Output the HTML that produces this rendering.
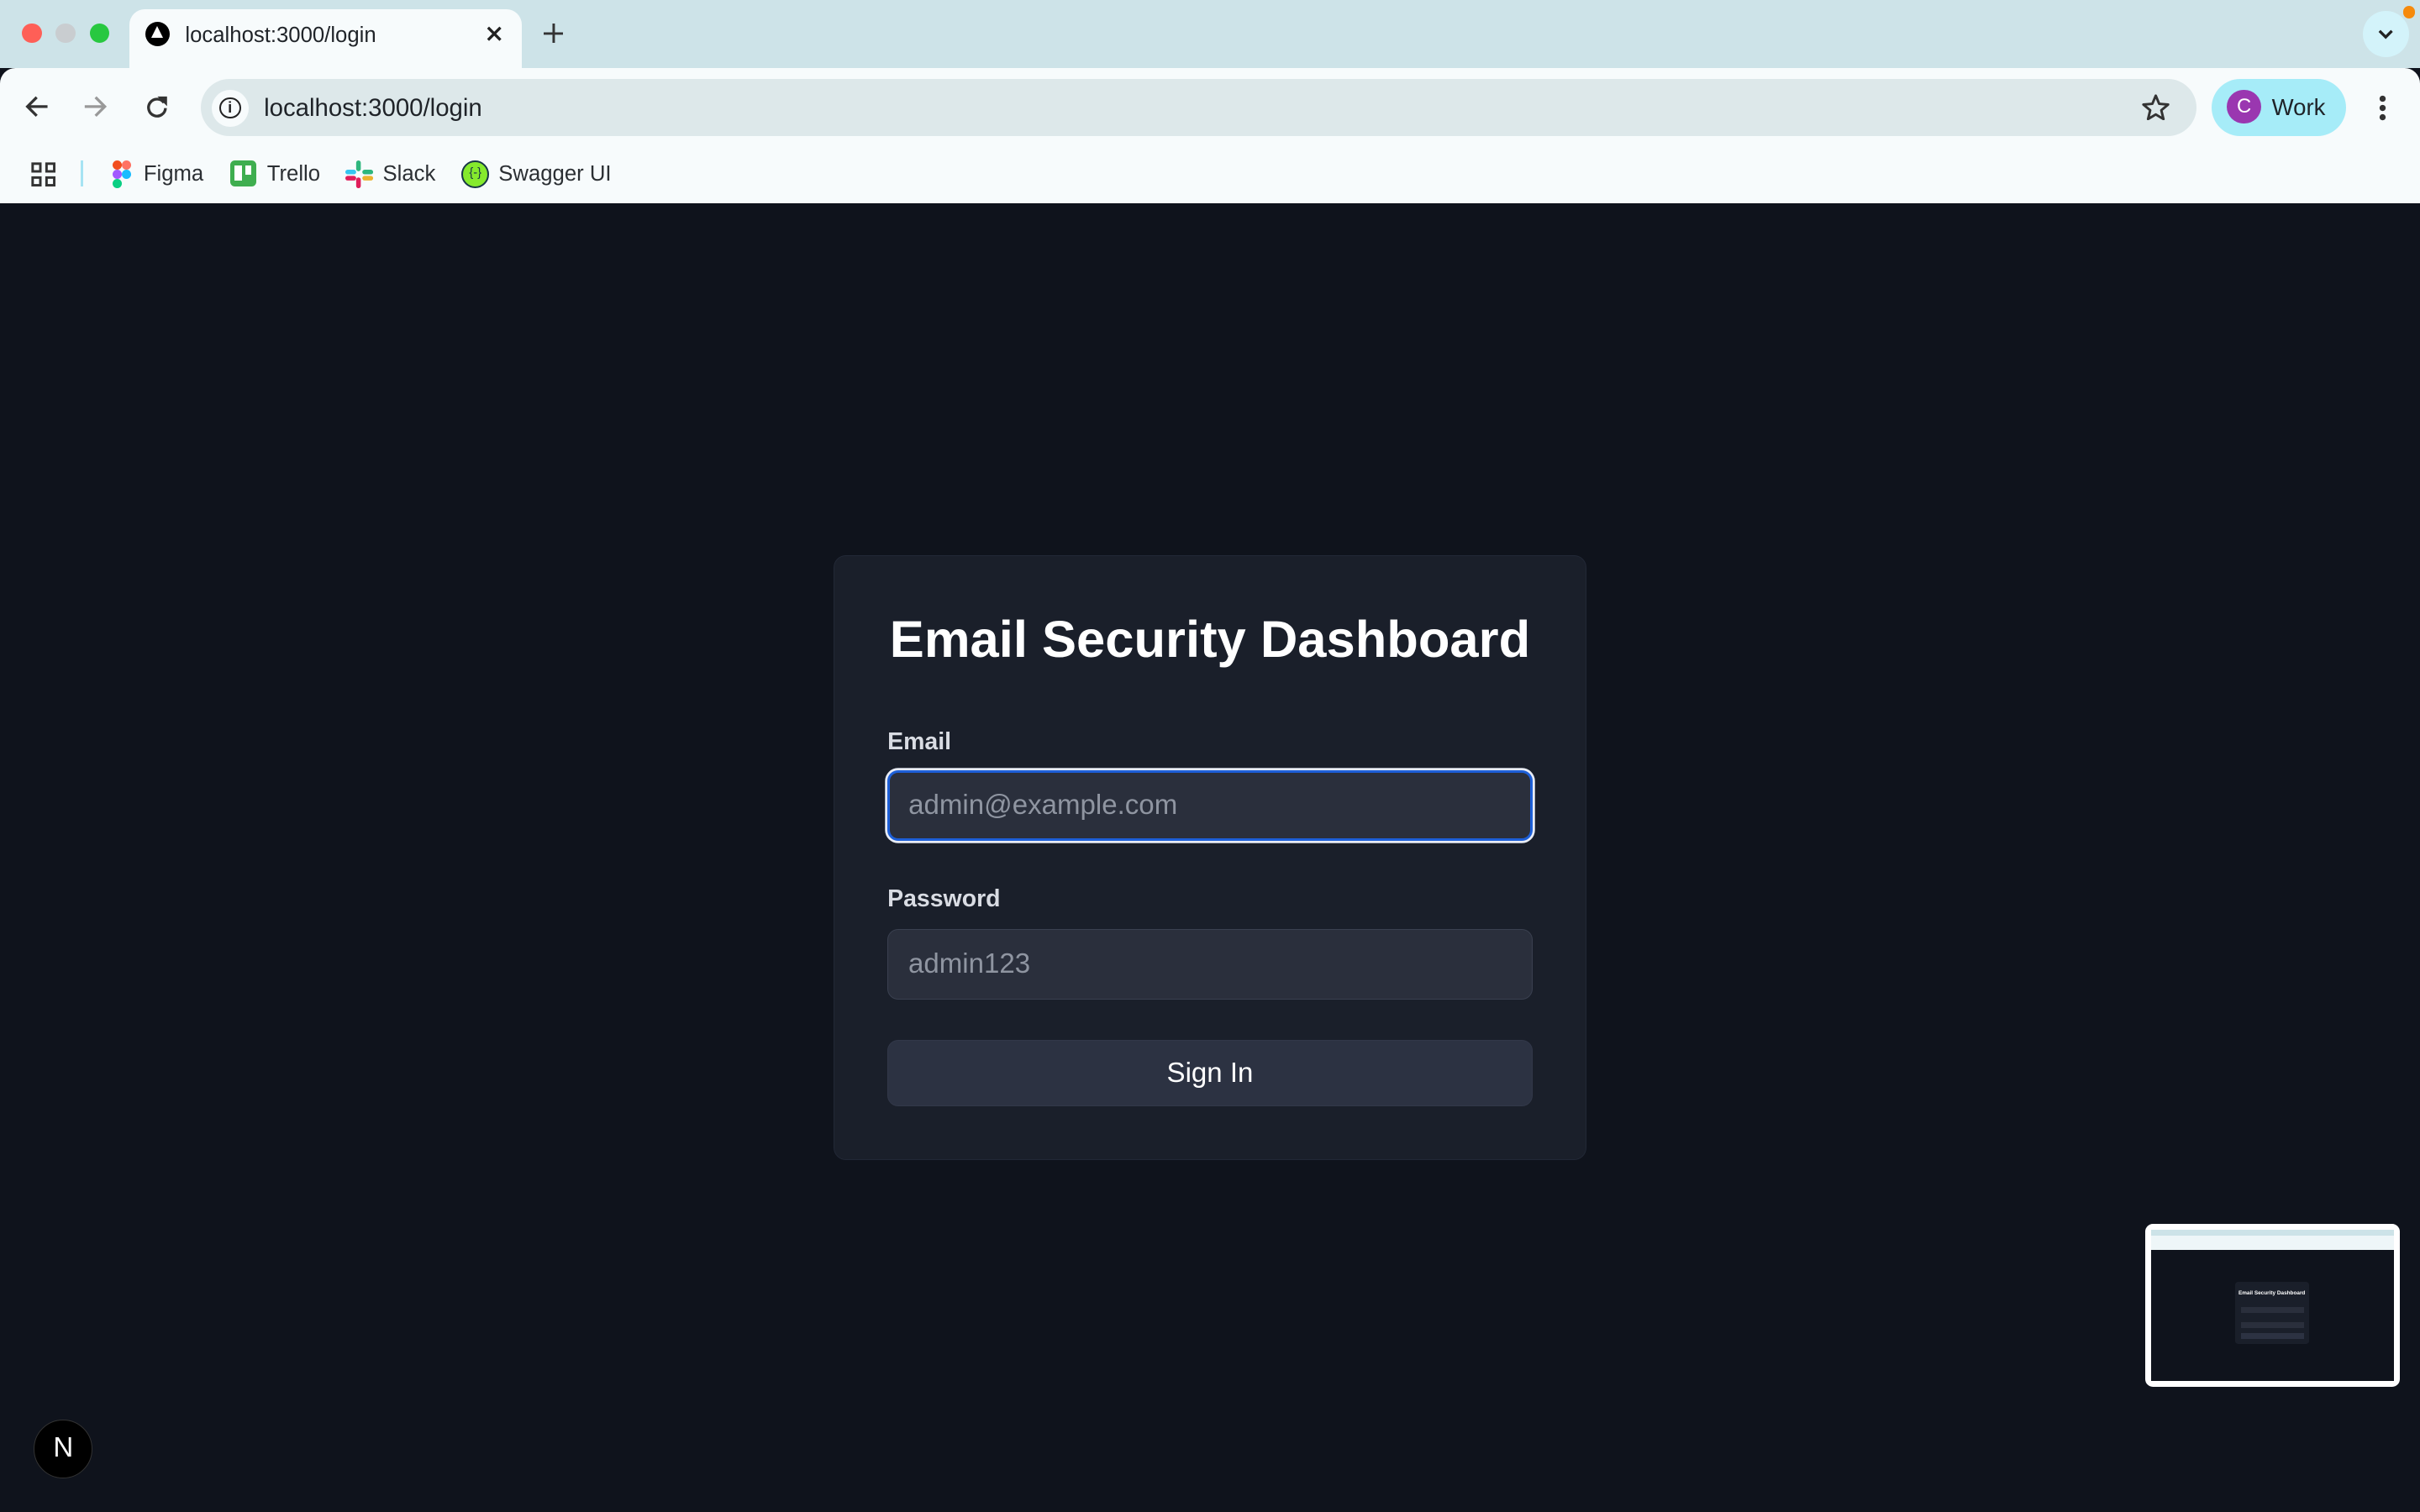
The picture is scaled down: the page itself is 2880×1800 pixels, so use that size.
<!DOCTYPE html>
<html><head><meta charset="utf-8">
<style>
*{box-sizing:border-box;margin:0;padding:0}
html,body{width:2880px;height:1800px;overflow:hidden}
body{zoom:1.836735;width:1568px;height:980px;font-family:"Liberation Sans",sans-serif;background:#0f131c;position:relative}
.abs{position:absolute}
.tabs{left:0;top:0;width:1568px;height:44px;background:#cde3e8}
.tool{left:0;top:44px;width:1568px;height:88px;background:#f7fbfc;border-radius:10px 10px 0 0}
.tab{left:84px;top:6px;width:254px;height:40px;background:#f7fbfc;border-radius:10px 10px 0 0}
.dot{width:13px;height:13px;border-radius:50%;top:15px}
.omni{left:130px;top:51px;width:1293px;height:37px;background:#dde8ea;border-radius:19px}
.t{color:#1f2328;font-size:15px}
.bm{top:105px;font-size:14px;color:#2b2f33}
.card{left:540px;top:360px;width:488px;height:392px;background:#1a1f2a;border-radius:8px;border:1px solid #222836}
.title{left:530px;width:508px;top:395px;text-align:center;color:#fff;font-weight:bold;font-size:33.5px;white-space:nowrap}
.lbl{left:575px;color:#d9dce3;font-size:15.5px;font-weight:bold}
.inp{left:575px;width:418px;height:46px;background:#2a2f3c;border-radius:7px;border:1px solid #3a4050;color:#8f95a1;font-size:18px;padding:12px 13px}
</style></head><body>
<div class="abs tabs"></div>
<div class="abs dot" style="left:14px;background:#fe5f57"></div>
<div class="abs dot" style="left:36px;background:#c9cdd0"></div>
<div class="abs dot" style="left:58px;background:#28c840"></div>
<div class="abs tab"></div>
<div class="abs" style="left:94px;top:14px;width:16px;height:16px;border-radius:50%;background:#000"></div>
<div class="abs" style="left:98px;top:17px;width:0;height:0;border-left:4px solid transparent;border-right:4px solid transparent;border-bottom:8px solid #fff"></div>
<div class="abs t" style="left:120px;top:15px;font-size:14px">localhost:3000/login</div>
<svg class="abs" style="left:315px;top:17px" width="10" height="10"><path d="M1 1L9 9M9 1L1 9" stroke="#222" stroke-width="1.8"/></svg>
<svg class="abs" style="left:352px;top:15px" width="13" height="13"><path d="M6.5 0V13M0 6.5H13" stroke="#333" stroke-width="1.6"/></svg>
<div class="abs" style="left:1531px;top:7px;width:30px;height:30px;border-radius:50%;background:#d3f3fa"></div>
<svg class="abs" style="left:1541px;top:19px" width="10" height="7"><path d="M1 1L5 5L9 1" fill="none" stroke="#222" stroke-width="1.8"/></svg>
<div class="abs" style="left:1557px;top:4px;width:8px;height:8px;border-radius:50%;background:#f68a0c"></div>
<div class="abs tool"></div>
<svg class="abs" style="left:16px;top:62px" width="16" height="14"><path d="M15 7H2M8 1L2 7L8 13" fill="none" stroke="#333" stroke-width="1.8"/></svg>
<svg class="abs" style="left:54px;top:62px" width="16" height="14"><path d="M1 7H14M8 1L14 7L8 13" fill="none" stroke="#999" stroke-width="1.8"/></svg>
<svg class="abs" style="left:95px;top:62px" width="14" height="14"><path d="M11.5 4.5A5.5 5.5 0 1 0 12.5 8" fill="none" stroke="#333" stroke-width="1.8"/><path d="M8.5 1H13V5.5Z" fill="#333" stroke="#333" stroke-width="1"/></svg>
<div class="abs omni"></div>
<div class="abs" style="left:137px;top:58px;width:24px;height:24px;border-radius:50%;background:#f7fbfc"></div>
<div class="abs" style="left:142px;top:63px;width:14px;height:14px;border-radius:50%;border:1.6px solid #222;font-size:10px;text-align:center;line-height:11px;font-weight:bold;color:#222">i</div>
<div class="abs t" style="left:171px;top:61px;font-size:16px">localhost:3000/login</div>
<svg class="abs" style="left:1388px;top:61px" width="18" height="17"><path d="M9 1L11.2 6.3L17 6.8L12.6 10.5L14 16.2L9 13.2L4 16.2L5.4 10.5L1 6.8L6.8 6.3Z" fill="none" stroke="#333" stroke-width="1.6" stroke-linejoin="round"/></svg>
<div class="abs" style="left:1433px;top:51px;width:87px;height:37px;border-radius:19px;background:#a6ecf8"></div>
<div class="abs" style="left:1443px;top:58px;width:22px;height:22px;border-radius:50%;background:#9a37b0;color:#fff;font-size:13px;text-align:center;line-height:22px">C</div>
<div class="abs t" style="left:1472px;top:61px;font-size:15px">Work</div>
<svg class="abs" style="left:1541px;top:61px" width="6" height="18"><circle cx="3" cy="3" r="2" fill="#333"/><circle cx="3" cy="9" r="2" fill="#333"/><circle cx="3" cy="15" r="2" fill="#333"/></svg>
<svg class="abs" style="left:20px;top:105px" width="16" height="16"><g fill="none" stroke="#333" stroke-width="1.6"><rect x="1" y="1" width="5" height="5"/><rect x="10" y="1" width="5" height="5"/><rect x="1" y="10" width="5" height="5"/><rect x="10" y="10" width="5" height="5"/></g></svg>
<div class="abs" style="left:52px;top:104px;width:2px;height:17px;background:#a6e3f3"></div>
<svg class="abs" style="left:73px;top:104px" width="12" height="18"><circle cx="3" cy="3" r="3" fill="#f24e1e"/><circle cx="9" cy="3" r="3" fill="#ff7262"/><circle cx="3" cy="9" r="3" fill="#a259ff"/><circle cx="9" cy="9" r="3" fill="#1abcfe"/><circle cx="3" cy="15" r="3" fill="#0acf83"/></svg>
<div class="abs bm" style="left:93px">Figma</div>
<div class="abs" style="left:149px;top:104px;width:17px;height:17px;border-radius:3px;background:#3fae4f"></div>
<div class="abs" style="left:152px;top:107px;width:5px;height:10px;background:#fff"></div>
<div class="abs" style="left:159px;top:107px;width:4px;height:6px;background:#fff"></div>
<div class="abs bm" style="left:173px">Trello</div>
<svg class="abs" style="left:224px;top:104px" width="18" height="18"><rect x="0" y="6" width="7" height="3" rx="1.5" fill="#36c5f0"/><rect x="7" y="0" width="3" height="7" rx="1.5" fill="#2eb67d"/><rect x="11" y="6" width="7" height="3" rx="1.5" fill="#2eb67d"/><rect x="0" y="10" width="7" height="3" rx="1.5" fill="#e01e5a"/><rect x="7" y="11" width="3" height="7" rx="1.5" fill="#e01e5a"/><rect x="11" y="10" width="7" height="3" rx="1.5" fill="#ecb22e"/></svg>
<div class="abs bm" style="left:248px">Slack</div>
<div class="abs" style="left:299px;top:104px;width:18px;height:18px;border-radius:50%;background:#85ea2d;border:1.5px solid #173647;font-size:8px;text-align:center;line-height:15px;color:#173647">{-}</div>
<div class="abs bm" style="left:323px">Swagger UI</div>

<div class="abs card"></div>
<div class="abs title">Email Security Dashboard</div>
<div class="abs lbl" style="top:472px">Email</div>
<div class="abs inp" style="top:499px;border:2px solid #1d5fd8;box-shadow:0 0 0 1.5px #e8ecf5;padding:11px 12px">admin@example.com</div>
<div class="abs lbl" style="top:574px">Password</div>
<div class="abs inp" style="top:602px">admin123</div>
<div class="abs" style="left:575px;top:674px;width:418px;height:43px;background:#2c3242;border-radius:7px;border:1px solid #323849;color:#fff;font-size:18px;text-align:center;line-height:42px">Sign In</div>

<div class="abs" style="left:22px;top:920px;width:38px;height:38px;border-radius:50%;background:#000;border:1px solid #333;color:#fff;font-size:18px;text-align:center;line-height:36px">N</div>

<div class="abs" style="left:1390px;top:793px;width:165px;height:106px;background:#fff;border-radius:5px"></div>
<div class="abs" style="left:1394px;top:797px;width:157px;height:98px;background:#0f131c"></div>
<div class="abs" style="left:1394px;top:797px;width:157px;height:13px;background:#eef6f8"></div>
<div class="abs" style="left:1394px;top:797px;width:157px;height:4px;background:#cde3e8"></div>
<div class="abs" style="left:1448px;top:831px;width:48px;height:40px;background:#1a1f2a;border-radius:2px"></div>
<div class="abs" style="left:1446px;top:836px;width:52px;font-size:3.5px;color:#fff;font-weight:bold;text-align:center;white-space:nowrap">Email Security Dashboard</div>
<div class="abs" style="left:1452px;top:847px;width:41px;height:4px;background:#2a2f3c"></div>
<div class="abs" style="left:1452px;top:857px;width:41px;height:4px;background:#2a2f3c"></div>
<div class="abs" style="left:1452px;top:864px;width:41px;height:4px;background:#2c3242"></div>
</body></html>
